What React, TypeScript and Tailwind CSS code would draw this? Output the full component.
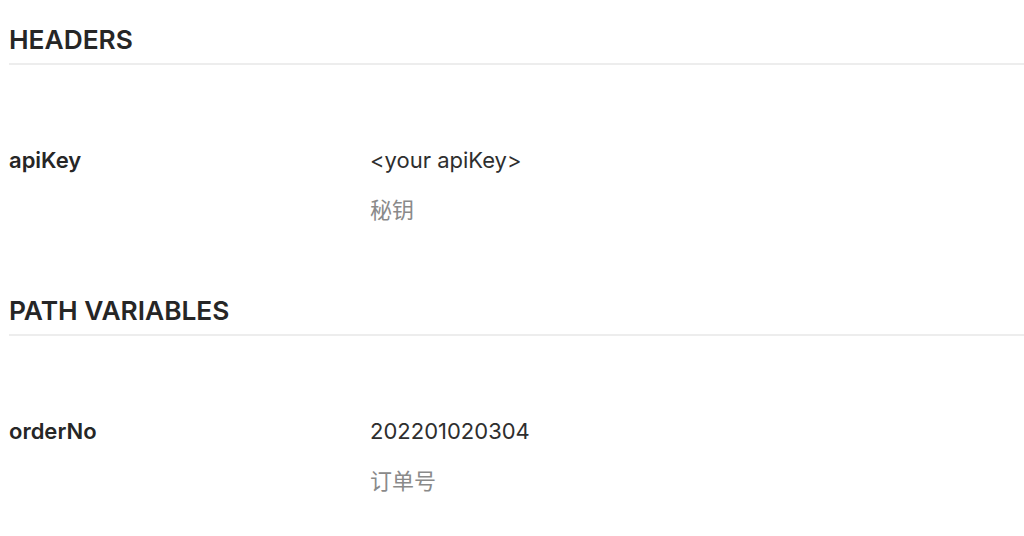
const FONT = "font-['Inter','Noto_Sans_CJK_SC',sans-serif]";

const sections = [
  { title: "HEADERS", rows: [{ name: "apiKey", value: "<your apiKey>", desc: "秘钥" }] },
  { title: "PATH VARIABLES", rows: [{ name: "orderNo", value: "202201020304", desc: "订单号" }] },
];

export default function App() {
  return (
    <div className={`${FONT} bg-white w-[1024px] h-[536px] overflow-hidden pl-[9px] pt-[24px] text-[#262626]`}>
      {sections.map((s) => (
        <section key={s.title} className="mb-[70px]">
          <h2 className="text-[26.3px] leading-[32px] font-semibold pb-[7px] border-b-2 border-[#ededed]">
            {s.title}
          </h2>
          {s.rows.map((r) => (
            <div key={r.name} className="grid grid-cols-[361px_1fr] mt-[80px]">
              <div className="text-[22px] leading-[30px] font-semibold">{r.name}</div>
              <div>
                <div className="text-[22px] leading-[30px] text-[#2e2e2e]">{r.value}</div>
                <div className="text-[22px] leading-[30px] text-[#8a8a8a] mt-[20px]">{r.desc}</div>
              </div>
            </div>
          ))}
        </section>
      ))}
    </div>
  );
}
